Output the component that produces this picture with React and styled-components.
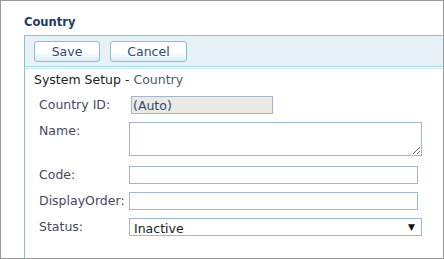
import React from "react";
import styled, { createGlobalStyle } from "styled-components";

const Global = createGlobalStyle`
  html, body {
    margin: 0;
    padding: 0;
    background: #ffffff;
  }
  body {
    font-family: "DejaVu Sans", Verdana, sans-serif;
    font-size: 12.5px;
  }
`;

export default function App() {
  return (
    <>
      <Global />
      <Frame>
        <Title>Country</Title>
        <Panel>
          <Toolbar>
            <Button>Save</Button>
            <Button wide>Cancel</Button>
          </Toolbar>
          <Divider />
          <Crumb>
            System Setup - <CrumbPage>Country</CrumbPage>
          </Crumb>
          <Form>
            <Label>Country ID:</Label>
            <Field>
              <ReadOnly value="(Auto)" readOnly />
            </Field>
            <Label>Name:</Label>
            <Field>
              <Area />
            </Field>
            <Label>Code:</Label>
            <Field>
              <Text />
            </Field>
            <Label>DisplayOrder:</Label>
            <Field>
              <Text />
            </Field>
            <Label>Status:</Label>
            <Field>
              <Select>
                <SelectValue>Inactive</SelectValue>
                <Arrow>▼</Arrow>
              </Select>
            </Field>
          </Form>
        </Panel>
      </Frame>
    </>
  );
}

const Frame = styled.div`
  box-sizing: border-box;
  width: 444px;
  height: 259px;
  border: 1px solid #999999;
  padding: 14px 0 0 23px;
  display: flex;
  flex-direction: column;
  overflow: hidden;
`;

const Title = styled.h2`
  margin: 0;
  font-size: 11.5px;
  line-height: 15px;
  font-weight: bold;
  color: #243b63;
  height: 20px;
`;

const Panel = styled.div`
  flex: 1;
  border-top: 1px solid #86c4cc;
  border-left: 1px solid #86c4cc;
`;

const Toolbar = styled.div`
  box-sizing: border-box;
  height: 31px;
  background: #e8f0f8;
  border-bottom: 1px solid #a6d6dc;
  padding: 5px 0 0 9px;
  display: flex;
  gap: 10px;
`;

const Divider = styled.div`
  margin-top: 1px;
  height: 1px;
  background: #d2ecee;
`;

const Button = styled.button`
  box-sizing: border-box;
  width: ${(p) => (p.wide ? "77px" : "66px")};
  height: 21px;
  padding: 0;
  border: 1px solid #86c2cc;
  border-radius: 3px;
  background: linear-gradient(#ffffff 55%, #d6eaf2);
  font-family: "DejaVu Sans", Verdana, sans-serif;
  font-size: 12.5px;
  color: #2c4a7c;
`;

const Crumb = styled.div`
  margin: 3px 0 0 9px;
  line-height: 15px;
  color: #222222;
`;

const CrumbPage = styled.span`
  color: #4e5a66;
`;

const Form = styled.div`
  display: grid;
  grid-template-columns: 90px 1fr;
  row-gap: 8px;
  margin: 9px 0 0 14px;
`;

const Label = styled.div`
  color: #47475f;
  line-height: 15px;
  margin-top: 1px;
`;

const Field = styled.div`
  display: flex;
`;

const Text = styled.input`
  box-sizing: border-box;
  width: 289px;
  height: 18px;
  margin: 0;
  border: 1px solid #a3b7cc;
  font-family: "DejaVu Sans", Verdana, sans-serif;
  font-size: 12.5px;
  outline: none;
`;

const ReadOnly = styled(Text)`
  width: 142px;
  margin-left: 2px;
  padding: 0 1px;
  background: #ebe9e2;
  color: #2c4a7c;
`;

const Area = styled.textarea`
  box-sizing: border-box;
  width: 293px;
  height: 34px;
  margin: 0 0 2px;
  border: 1px solid #a3b7cc;
  font-family: "DejaVu Sans", Verdana, sans-serif;
  font-size: 12.5px;
  outline: none;
`;

const Select = styled.div`
  box-sizing: border-box;
  width: 293px;
  height: 18px;
  border: 1px solid #a3b7cc;
  display: flex;
  align-items: center;
  justify-content: space-between;
  padding: 0 6px 0 4px;
`;

const SelectValue = styled.span`
  color: #222222;
  line-height: 15px;
  margin-top: 2px;
`;

const Arrow = styled.span`
  font-size: 9px;
  color: #111111;
`;
